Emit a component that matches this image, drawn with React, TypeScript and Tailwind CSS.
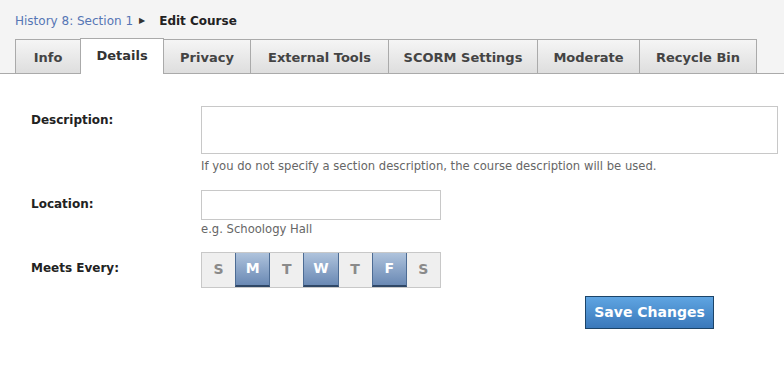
import { ReactElement } from 'react';

const tabs = [
  { label: 'Info', width: 'w-[66px]' },
  { label: 'Details', width: 'w-[84px]', active: true },
  { label: 'Privacy', width: 'w-[88px]' },
  { label: 'External Tools', width: 'w-[139px]' },
  { label: 'SCORM Settings', width: 'w-[150px]' },
  { label: 'Moderate', width: 'w-[103px]' },
  { label: 'Recycle Bin', width: 'w-[118px]' },
];

const days = [
  { label: 'S', on: false },
  { label: 'M', on: true },
  { label: 'T', on: false },
  { label: 'W', on: true },
  { label: 'T', on: false },
  { label: 'F', on: true },
  { label: 'S', on: false },
];

const Tabs = (): ReactElement => (
  <div className="flex items-end h-[35px] border-b border-[#aaaaaa] pl-[15px]">
    {tabs.map((tab, i) => (
      <div
        key={tab.label}
        className={
          tab.active
            ? `${tab.width} h-[36px] -mb-px -ml-px flex items-center justify-center border border-b-0 border-[#aaaaaa] bg-white pb-[1px] text-[#333] font-bold text-[13px]`
            : `${tab.width} h-[34px] ${i === 0 ? '' : '-ml-px'} flex items-center justify-center border border-b-0 border-[#aaaaaa] bg-gradient-to-b from-[#f5f5f5] to-[#dedede] pt-[2px] text-[#444] font-bold text-[13px]`
        }
      >
        {tab.label}
      </div>
    ))}
  </div>
);

const App = (): ReactElement => {
  return (
    <div className="w-[784px] h-[378px] bg-white font-['DejaVu_Sans',sans-serif] text-[13px] text-[#333] overflow-hidden">
      <div className="bg-[#f4f4f4] pt-[11px]">
        <div className="flex items-center h-[20px] pl-[15px] text-[12px]">
          <span className="text-[#5676b5]">History 8: Section 1</span>
          <span className="ml-[6px] text-[8px] text-[#333]">&#9654;</span>
          <span className="ml-[14px] font-bold text-[#222]">Edit Course</span>
        </div>
        <div className="mt-[8px]">
          <Tabs />
        </div>
      </div>

      <div className="pl-[31px] pt-[32px]">
        <div className="flex">
          <div className="w-[170px] pt-[5px] font-bold text-[12px] text-[#222]">Description:</div>
          <div>
            <div className="w-[577px] h-[48px] border border-[#c8c8c8] bg-white" />
            <div className="mt-[4px] text-[11.6px] text-[#666]">
              If you do not specify a section description, the course description will be used.
            </div>
          </div>
        </div>

        <div className="flex mt-[15px]">
          <div className="w-[170px] pt-[5px] font-bold text-[12px] text-[#222]">Location:</div>
          <div>
            <div className="w-[240px] h-[30px] border border-[#c8c8c8] bg-white" />
            <div className="mt-[1px] text-[11.6px] text-[#666]">e.g. Schoology Hall</div>
          </div>
        </div>

        <div className="flex mt-[13px]">
          <div className="w-[170px] pt-[7px] font-bold text-[12px] text-[#222]">Meets Every:</div>
          <div className="flex w-[240px] h-[36px] border border-[#c8c8c8]">
            {days.map((d, i) => (
              <div
                key={i}
                className={
                  d.on
                    ? 'flex-1 flex items-center justify-center bg-gradient-to-b from-[#afc3dc] to-[#6a89b4] border-x border-[#4d6c94] border-b-2 border-b-[#2f4766] text-white font-bold text-[14px]'
                    : 'flex-1 flex items-center justify-center bg-[#efefef] text-[#8a8a8a] font-bold text-[14px]'
                }
              >
                {d.label}
              </div>
            ))}
          </div>
        </div>

        <div className="flex mt-[8px] pl-[554px]">
          <button className="w-[129px] h-[33px] border border-[#1c4468] bg-gradient-to-b from-[#5fa5e2] to-[#3a78ba] text-white font-bold text-[14px]">
            Save Changes
          </button>
        </div>
      </div>
    </div>
  );
};

export default App;
